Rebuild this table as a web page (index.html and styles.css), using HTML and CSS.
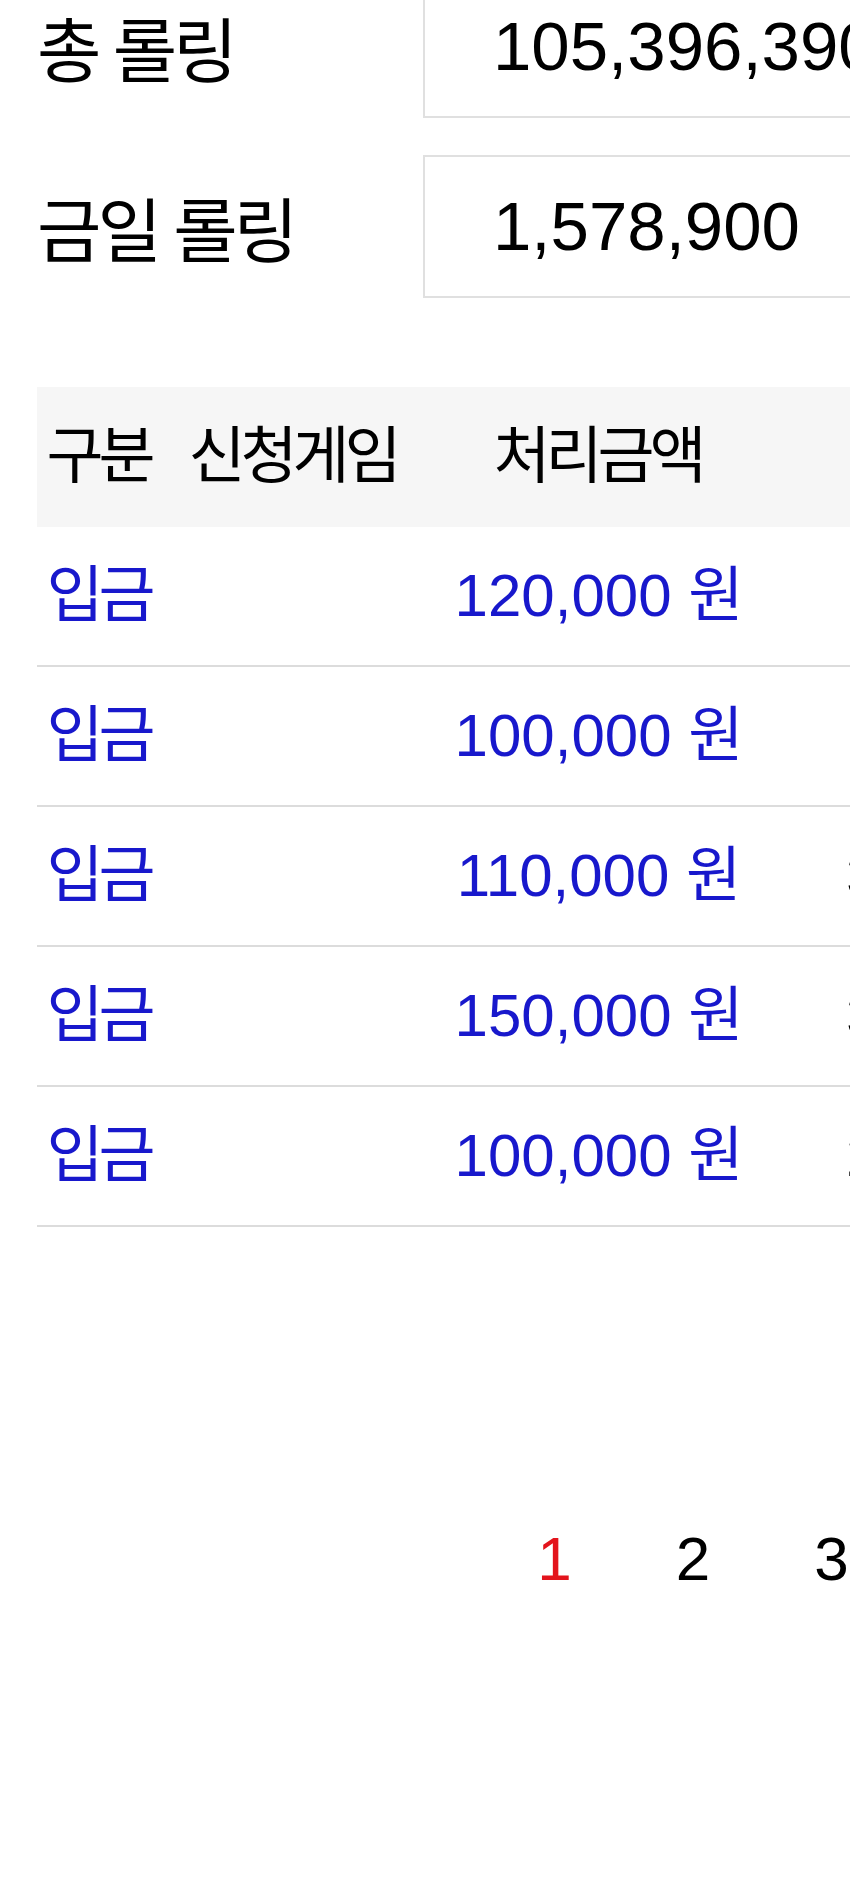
FILE: index.html
```html
<!DOCTYPE html>
<html lang="ko">
<head>
<meta charset="utf-8">
<title>롤링 내역</title>
<link rel="stylesheet" href="styles.css">
</head>
<body>
<div class="page">
  <div class="sheet">
    <section class="form">
      <div class="field">
        <span class="label">총 롤링</span>
        <div class="box">105,396,390</div>
      </div>
      <div class="field">
        <span class="label">금일 롤링</span>
        <div class="box">1,578,900</div>
      </div>
    </section>

    <table class="list">
      <colgroup>
        <col class="c1"><col class="c2"><col class="c3"><col class="c4"><col>
      </colgroup>
      <thead>
        <tr><th>구분</th><th>신청게임</th><th>처리금액</th><th>보너스</th><th>상태</th></tr>
      </thead>
      <tbody>
        <tr><td class="kind">입금</td><td></td><td class="amt">120,000 원</td><td class="etc">5,000</td><td class="etc">완료</td></tr>
        <tr><td class="kind">입금</td><td></td><td class="amt">100,000 원</td><td class="etc">5,000</td><td class="etc">완료</td></tr>
        <tr><td class="kind">입금</td><td></td><td class="amt">110,000 원</td><td class="etc">30,000</td><td class="etc">완료</td></tr>
        <tr><td class="kind">입금</td><td></td><td class="amt">150,000 원</td><td class="etc">30,000</td><td class="etc">완료</td></tr>
        <tr><td class="kind">입금</td><td></td><td class="amt">100,000 원</td><td class="etc">20,000</td><td class="etc">완료</td></tr>
      </tbody>
    </table>

    <nav class="pager">
      <a class="cur">1</a><a>2</a><a>3</a><a>4</a><a>5</a>
    </nav>
  </div>
</div>
</body>
</html>
```

FILE: styles.css
```css
html, body {
  margin: 0;
  padding: 0;
  background: #ffffff;
  overflow: hidden;
}

.page {
  width: 850px;
  height: 1889px;
  overflow: hidden;
  font-family: "Liberation Sans", "Noto Sans CJK KR", sans-serif;
  color: #000;
}

.sheet {
  width: 1663px;
  padding: 0 37px;
  box-sizing: border-box;
}

/* form */
.form {
  display: flex;
  flex-direction: column;
  gap: 37px;
  margin-top: -25px;
}

.field {
  display: grid;
  grid-template-columns: 386px 640px;
  align-items: center;
}

.label {
  font-size: 70px;
  letter-spacing: -4px;
  white-space: nowrap;
}

.box {
  height: 143px;
  box-sizing: border-box;
  border: 2px solid #e0e0e0;
  display: flex;
  align-items: center;
  padding-left: 68px;
  font-size: 69px;
  white-space: nowrap;
}

/* table */
.list {
  margin-top: 89px;
  width: 1589px;
  table-layout: fixed;
  border-collapse: separate;
  border-spacing: 0;
  font-size: 60px;
}

.list col.c1 { width: 126px; }
.list col.c2 { width: 262px; }
.list col.c3 { width: 348px; }
.list col.c4 { width: 330px; }

.list th {
  background: #f6f6f6;
  font-weight: normal;
  font-size: 62px;
  line-height: 140px;
  padding: 0;
  letter-spacing: -5px;
  text-indent: -3px;
  white-space: nowrap;
  text-align: center;
}

.list td {
  padding: 0;
  line-height: 138px;
  border-bottom: 2px solid #dcdcdc;
  text-align: center;
  white-space: nowrap;
  color: #1818cc;
}

.list td.kind {
  font-size: 62px;
  letter-spacing: -5px;
  text-indent: -3px;
}

.list td.etc {
  color: #000;
}

/* pager */
.pager {
  display: flex;
  justify-content: center;
  margin-top: 262px;
  font-size: 62px;
}

.pager a {
  width: 138.5px;
  line-height: 140px;
  text-align: center;
  color: #000;
}

.pager a.cur {
  color: #e3141c;
}
```
